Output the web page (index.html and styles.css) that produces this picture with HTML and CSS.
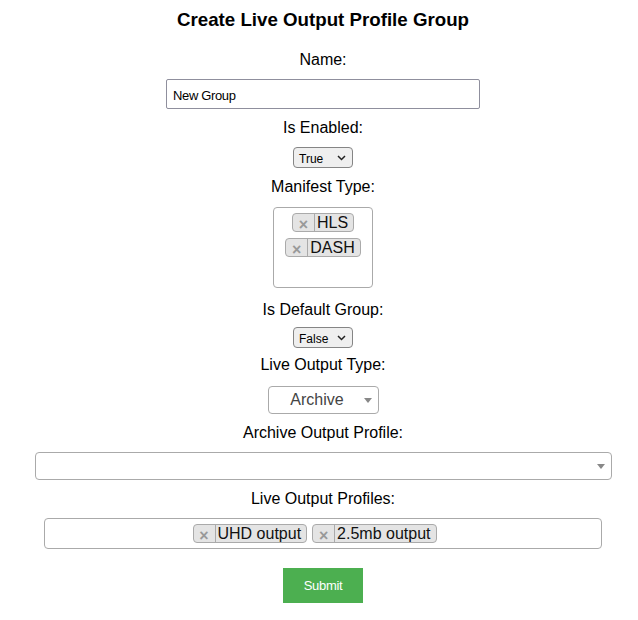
FILE: index.html
```html
<!DOCTYPE html>
<html lang="en">
<head>
<meta charset="utf-8">
<title>Create Live Output Profile Group</title>
<link rel="stylesheet" href="styles.css">
</head>
<body>
<div class="page">
  <form class="form">
    <h3 class="title">Create Live Output Profile Group</h3>

    <label class="label gap-20">Name:</label>
    <input class="text-input gap-10" type="text" value="New Group">

    <label class="label gap-10">Is Enabled:</label>
    <div class="native-select gap-10">
      <span class="native-select__text">True</span>
      <svg class="chevron" width="9" height="6" viewBox="0 0 9 6"><path d="M1 1 L4.5 4.5 L8 1" fill="none" stroke="#222" stroke-width="1.5"/></svg>
    </div>

    <label class="label gap-10">Manifest Type:</label>
    <div class="multi-box gap-11">
      <span class="tag"><span class="tag__remove">×</span><span class="tag__text">HLS</span></span>
      <span class="tag"><span class="tag__remove">×</span><span class="tag__text">DASH</span></span>
    </div>

    <label class="label gap-13">Is Default Group:</label>
    <div class="native-select gap-8">
      <span class="native-select__text">False</span>
      <svg class="chevron" width="9" height="6" viewBox="0 0 9 6"><path d="M1 1 L4.5 4.5 L8 1" fill="none" stroke="#222" stroke-width="1.5"/></svg>
    </div>

    <label class="label gap-8">Live Output Type:</label>
    <div class="s2-single s2-single--small gap-12">
      <span class="s2-single__text">Archive</span>
      <b class="s2-arrow"></b>
    </div>

    <label class="label gap-10">Archive Output Profile:</label>
    <div class="s2-single s2-single--wide gap-10">
      <span class="s2-single__text"></span>
      <b class="s2-arrow"></b>
    </div>

    <label class="label gap-10">Live Output Profiles:</label>
    <div class="s2-multi gap-10">
      <span class="tag"><span class="tag__remove">×</span><span class="tag__text">UHD output</span></span>
      <span class="tag"><span class="tag__remove">×</span><span class="tag__text">2.5mb output</span></span>
      <span class="s2-search"></span>
    </div>

    <button class="submit gap-19" type="button">Submit</button>
  </form>
</div>
</body>
</html>
```

FILE: styles.css
```css
html, body {
  margin: 0;
  padding: 0;
  background: #fff;
}

body {
  font-family: "Liberation Sans", Arial, sans-serif;
  color: #000;
}

.page {
  padding-left: 8px;
  width: 638px;
  box-sizing: border-box;
}

.form {
  display: flex;
  flex-direction: column;
  align-items: center;
  margin: 0;
}

.title {
  margin: 9px 0 0;
  font-size: 18.72px;
  line-height: 22px;
  font-weight: bold;
}

.label {
  display: block;
  font-size: 16px;
  line-height: 18px;
}

.gap-8 { margin-top: 8px; }
.gap-10 { margin-top: 10px; }
.gap-11 { margin-top: 11px; }
.gap-12 { margin-top: 12px; }
.gap-13 { margin-top: 13px; }
.gap-19 { margin-top: 19px; }
.gap-20 { margin-top: 20px; }

.text-input {
  box-sizing: border-box;
  width: 314px;
  height: 30px;
  border: 1px solid #8f8f9d;
  border-radius: 2px;
  padding: 2px 6px 0;
  font-family: "Liberation Sans", Arial, sans-serif;
  font-size: 13px;
  letter-spacing: -0.35px;
  color: #000;
  background: #fff;
  outline: none;
}

.native-select {
  box-sizing: border-box;
  width: 60px;
  height: 21px;
  border: 1px solid #858585;
  border-radius: 4px;
  background: #efefef;
  display: flex;
  align-items: center;
  justify-content: space-between;
  padding: 0 6px 0 5px;
}

.native-select__text {
  font-size: 12px;
  line-height: 16px;
  padding-top: 3px;
  color: #000;
}

.chevron {
  display: block;
}

.multi-box {
  box-sizing: border-box;
  width: 100px;
  height: 81px;
  border: 1px solid #aaa;
  border-radius: 4px;
  padding-top: 5px;
  display: flex;
  flex-direction: column;
  align-items: center;
  gap: 6px;
}

.tag {
  box-sizing: border-box;
  display: inline-flex;
  height: 19px;
  border: 1px solid #aaa;
  border-radius: 4px;
  background: #e4e4e4;
  font-size: 16px;
  line-height: 17px;
  color: #111;
  white-space: nowrap;
}

.tag__remove {
  box-sizing: border-box;
  width: 22px;
  height: 17px;
  border-right: 1px solid #aaa;
  color: #999;
  font-weight: bold;
  text-align: center;
  padding-top: 2px;
  line-height: 17px;
}

.tag__text {
  padding: 0 5px 0 2px;
}

.s2-single {
  box-sizing: border-box;
  position: relative;
  height: 28px;
  border: 1px solid #aaa;
  border-radius: 4px;
  background: #fff;
  padding: 0 20px 0 8px;
  font-size: 16px;
  line-height: 26px;
  color: #444;
  text-align: center;
}

.s2-single--small { width: 111px; }
.s2-single--wide { width: 577px; }

.s2-arrow {
  position: absolute;
  right: 6px;
  top: 50%;
  margin-top: -2.5px;
  width: 0;
  height: 0;
  border-style: solid;
  border-width: 5px 4px 0 4px;
  border-color: #888 transparent transparent transparent;
}

.s2-multi {
  box-sizing: border-box;
  width: 558px;
  height: 31px;
  border: 1px solid #aaa;
  border-radius: 4px;
  padding: 5px;
  display: flex;
  justify-content: center;
  gap: 5px;
}

.s2-search {
  width: 12px;
}

.submit {
  box-sizing: border-box;
  width: 80px;
  height: 35px;
  border: none;
  background: #4caf50;
  color: #fff;
  font-family: "Liberation Sans", Arial, sans-serif;
  font-size: 13px;
  letter-spacing: -0.3px;
  padding: 0;
  cursor: pointer;
}
```
